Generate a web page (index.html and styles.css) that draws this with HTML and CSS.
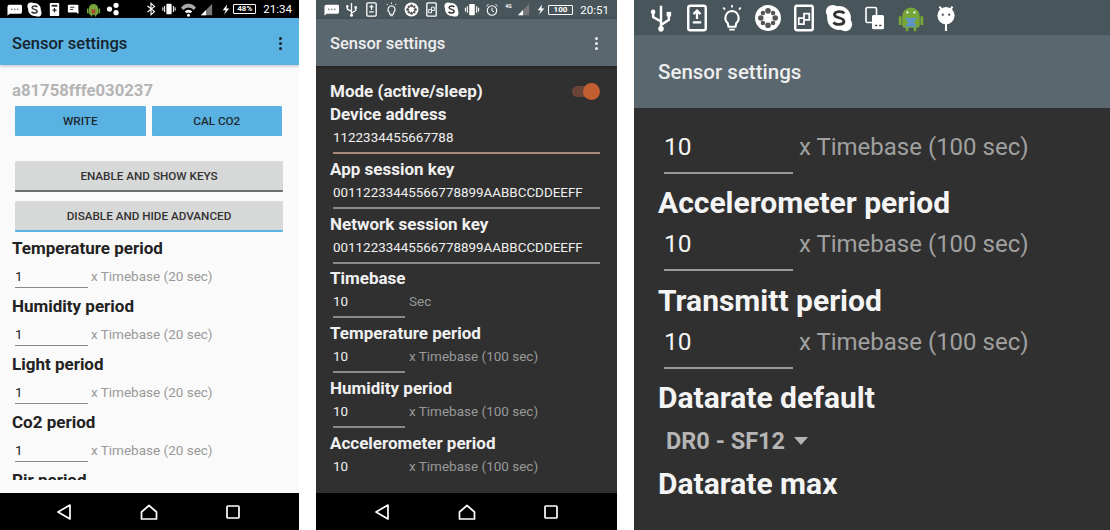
FILE: index.html

```html
<!DOCTYPE html>
<html lang="en">
<head>
    <meta charset="UTF-8">
    <title>Sensor settings</title>
    <link rel="stylesheet" href="styles.css">
</head>
<body>
    <svg class="defs" width="0" height="0">
        <defs>
            <g id="back"><path d="M14 1 L2 8 L14 15 Z" fill="none" stroke="#fff" stroke-width="1.7" stroke-linejoin="round"/></g>
            <g id="home"><path d="M1.5 8 L9 1.5 L16.5 8 V15 H1.5 Z" fill="none" stroke="#fff" stroke-width="1.7" stroke-linejoin="round"/></g>
            <g id="recent"><rect x="1" y="1" width="12" height="12" rx="1" fill="none" stroke="#fff" stroke-width="1.7"/></g>
            <g id="skype">
                <circle cx="8" cy="8" r="6.8" fill="#fff"/>
                <circle cx="4.4" cy="4.4" r="3.9" fill="#fff"/>
                <circle cx="11.6" cy="11.6" r="3.9" fill="#fff"/>
                <path d="M11 5.4 C10 3.9 5.6 3.9 5.4 6 C5.3 8.4 10.9 7.3 10.8 10 C10.6 12.2 6 12.1 4.9 10.4" fill="none" stroke="#333" stroke-width="1.6"/>
            </g>
            <g id="usb"><path d="M8 1 V15 M8 10 L3.5 7.5 V5 M8 12 L12.5 9 V6" fill="none" stroke="#fff" stroke-width="1.4"/><circle cx="3.5" cy="4.5" r="1.3" fill="#fff"/><rect x="11.2" y="4.5" width="2.6" height="2.6" fill="#fff"/><circle cx="8" cy="14.2" r="1.6" fill="#fff"/></g>
            <g id="phone-up"><rect x="3" y="1" width="10" height="14" rx="1.2" fill="none" stroke="#fff" stroke-width="1.4"/><path d="M8 3.8 V8.5 M6 5.8 L8 3.8 L10 5.8 M5.6 10.5 H10.4" fill="none" stroke="#fff" stroke-width="1.3"/></g>
            <g id="bulb"><path d="M8 4 A4 4 0 0 1 10.4 11 L10 13 H6 L5.6 11 A4 4 0 0 1 8 4 Z" fill="none" stroke="#fff" stroke-width="1.2"/><path d="M6.4 14.6 H9.6 M8 .5 V2 M3 2 L4 3.2 M13 2 L12 3.2" fill="none" stroke="#fff" stroke-width="1"/></g>
            <g id="reel"><circle cx="8" cy="8" r="7.4" fill="#fff"/><circle cx="8" cy="3.9" r="1.6" fill="#555"/><circle cx="8" cy="12.1" r="1.6" fill="#555"/><circle cx="3.9" cy="8" r="1.6" fill="#555"/><circle cx="12.1" cy="8" r="1.6" fill="#555"/><circle cx="5.1" cy="5.1" r="1.3" fill="#555"/><circle cx="10.9" cy="5.1" r="1.3" fill="#555"/><circle cx="5.1" cy="10.9" r="1.3" fill="#555"/><circle cx="10.9" cy="10.9" r="1.3" fill="#555"/></g>
            <g id="phone-copy"><rect x="3" y="1" width="10" height="14" rx="1" fill="none" stroke="#fff" stroke-width="1.4"/><path d="M8 5.5 H11 V9 H8 Z M5 8 H8 V11.5 H5 Z" fill="none" stroke="#fff" stroke-width="1"/></g>
            <g id="vibrate"><rect x="5" y="2" width="6" height="12" rx="1" fill="#fff"/><path d="M3 4.5 V11.5 M13 4.5 V11.5 M1 6 V10 M15 6 V10" stroke="#fff" stroke-width="1.2" fill="none"/></g>
            <g id="alarm"><circle cx="8" cy="8.6" r="5.4" fill="none" stroke="#fff" stroke-width="1.2"/><path d="M8 5.5 V9 L10.4 10 M1.6 3.6 L4 1.6 M14.4 3.6 L12 1.6" fill="none" stroke="#fff" stroke-width="1.1"/></g>
            <g id="chat"><path d="M2.5 3 H14.5 Q16 3 16 4.5 V11 Q16 12.5 14.5 12.5 H3 L0.5 14.5 V5 Q0.5 3 2.5 3 Z" fill="#fff"/><circle cx="5" cy="7.8" r="1" fill="#888"/><circle cx="8.2" cy="7.8" r="1" fill="#888"/><circle cx="11.4" cy="7.8" r="1" fill="#888"/></g>
            <g id="phone-sq"><rect x="3" y="1" width="10" height="14" rx="1" fill="#fff"/><rect x="5" y="3" width="6" height="2" fill="#222"/><path d="M8 6.5 V11 M5.8 8.7 H10.2" stroke="#222" stroke-width="1.3"/></g>
            <g id="note"><rect x="1" y="3" width="12" height="9" rx="1" fill="#fff"/><path d="M3.5 6 H8.5 M3.5 8.5 H7" stroke="#333" stroke-width="1.1"/><path d="M9.5 10 L13 14 V10 Z" fill="#fff"/></g>
            <g id="droid"><path d="M3 7 A5 5 0 0 1 13 7 V12 Q13 13.5 11.5 13.5 H11 V15.5 H9.5 V13.5 H6.5 V15.5 H5 V13.5 H4.5 Q3 13.5 3 12 Z" fill="#76a63a"/><rect x="1" y="7" width="1.6" height="5" fill="#76a63a"/><rect x="13.4" y="7" width="1.6" height="5" fill="#76a63a"/></g>
            <g id="droid-red"><use href="#droid"/><path d="M6 8 L10 12 M10 8 L6 12" stroke="#b5352c" stroke-width="1.5"/></g>
            <g id="droid-blue"><use href="#droid"/><path d="M4.5 8 H11.5 L9.5 10.5 L11.5 13 H4.5 L6.5 10.5 Z" fill="#5d93c9"/><circle cx="6" cy="4.8" r=".6" fill="#fff"/><circle cx="10" cy="4.8" r=".6" fill="#fff"/></g>
            <g id="share"><circle cx="4" cy="8" r="3" fill="#fff"/><circle cx="11.5" cy="3.8" r="3" fill="#fff"/><circle cx="11.5" cy="12.2" r="3" fill="#fff"/></g>
            <g id="swap"><rect x="2" y="1" width="7" height="10" rx="1" fill="none" stroke="#fff" stroke-width="1.1"/><rect x="6" y="6" width="8" height="9.5" rx="1" fill="#fff"/><path d="M8 13 H9.5 M10.8 13 H12.3" stroke="#444" stroke-width=".9"/></g>
            <g id="lollipop"><circle cx="8" cy="6.5" r="5.3" fill="#fff"/><path d="M8 11 V16 M4 1 L5.5 3 M12 1 L10.5 3" stroke="#fff" stroke-width="1.3"/><circle cx="6" cy="6" r=".7" fill="#556"/><circle cx="10" cy="6" r=".7" fill="#556"/></g>
            <g id="bt"><path d="M3 4.5 L11 11 L7 14.5 V1.5 L11 5 L3 11.5" fill="none" stroke="#fff" stroke-width="1.3"/></g>
            <g id="wifi"><path d="M1 6 A10 10 0 0 1 17 6 L14.5 8.5 A7 7 0 0 0 3.5 8.5 Z" fill="#aaa"/><path d="M5 10 A5.5 5.5 0 0 1 13 10 L11 12 A3 3 0 0 0 7 12 Z" fill="#fff"/><circle cx="9" cy="14" r="1.6" fill="#fff"/></g>
            <g id="signal"><path d="M14 1 V14 H1 Z" fill="#777"/><path d="M7 8 V14 H1 Z" fill="#fff"/></g>
            <g id="bolt"><path d="M7 0 L1 8 H5 L3 14 L10 5.5 H6 Z" fill="#fff"/></g>
        </defs>
    </svg>

    <!-- light theme -->
    <div class="phone phone-light">
        <div class="status status-light">
            <div class="status-icons">
                <svg width="15" height="15" viewBox="0 0 16 16"><use href="#chat"/></svg>
                <svg width="15" height="15" viewBox="0 0 16 16"><use href="#skype"/></svg>
                <svg width="15" height="15" viewBox="0 0 16 16"><use href="#phone-sq"/></svg>
                <svg width="14" height="14" viewBox="0 0 16 16"><use href="#note"/></svg>
                <svg width="15" height="15" viewBox="0 0 16 16"><use href="#droid-red"/></svg>
                <svg width="14" height="14" viewBox="0 0 16 16"><use href="#share"/></svg>
            </div>
            <div class="status-right">
                <svg width="14" height="14" viewBox="0 0 14 16"><use href="#bt"/></svg>
                <svg width="16" height="14" viewBox="0 0 16 16"><use href="#vibrate"/></svg>
                <svg width="17" height="15" viewBox="0 0 18 16"><use href="#wifi"/></svg>
                <svg width="13" height="13" viewBox="0 0 15 15"><use href="#signal"/></svg>
                <svg class="gap-left" width="8" height="11" viewBox="0 0 11 14"><use href="#bolt"/></svg>
                <span class="battery">48%</span>
                <span class="clock">21:34</span>
            </div>
        </div>
        <div class="appbar appbar-light">
            <span class="appbar-title">Sensor settings</span>
            <span class="dots"><i></i><i></i><i></i></span>
        </div>
        <div class="content content-light">
            <div class="device-id">a81758fffe030237</div>
            <div class="btn-row">
                <div class="btn btn-blue">WRITE</div>
                <div class="btn btn-blue">CAL CO2</div>
            </div>
            <div class="btn btn-grey btn-keys">ENABLE AND SHOW KEYS</div>
            <div class="btn btn-grey btn-adv">DISABLE AND HIDE ADVANCED</div>
            <div class="label">Temperature period</div>
            <div class="field"><span class="field-input">1</span><span class="field-unit">x Timebase (20 sec)</span></div>
            <div class="label">Humidity period</div>
            <div class="field"><span class="field-input">1</span><span class="field-unit">x Timebase (20 sec)</span></div>
            <div class="label">Light period</div>
            <div class="field"><span class="field-input">1</span><span class="field-unit">x Timebase (20 sec)</span></div>
            <div class="label">Co2 period</div>
            <div class="field"><span class="field-input">1</span><span class="field-unit">x Timebase (20 sec)</span></div>
            <div class="label">Pir period</div>
        </div>
        <div class="nav nav-light">
            <svg width="16" height="16" viewBox="0 0 16 16"><use href="#back"/></svg>
            <svg width="18" height="16" viewBox="0 0 18 16"><use href="#home"/></svg>
            <svg width="14" height="14" viewBox="0 0 14 14"><use href="#recent"/></svg>
        </div>
    </div>

    <!-- dark theme -->
    <div class="phone phone-dark">
        <div class="status status-dark">
            <div class="status-icons">
                <svg width="15" height="15" viewBox="0 0 16 16"><use href="#chat"/></svg>
                <svg width="15" height="15" viewBox="0 0 16 16"><use href="#usb"/></svg>
                <svg width="15" height="15" viewBox="0 0 16 16"><use href="#phone-up"/></svg>
                <svg width="15" height="15" viewBox="0 0 16 16"><use href="#bulb"/></svg>
                <svg width="15" height="15" viewBox="0 0 16 16"><use href="#reel"/></svg>
                <svg width="15" height="15" viewBox="0 0 16 16"><use href="#phone-copy"/></svg>
                <svg width="15" height="15" viewBox="0 0 16 16"><use href="#skype"/></svg>
                <svg width="16" height="15" viewBox="0 0 16 16"><use href="#vibrate"/></svg>
                <svg width="14" height="14" viewBox="0 0 16 16"><use href="#alarm"/></svg>
            </div>
            <div class="status-right">
                <span class="net">4G</span>
                <svg width="13" height="13" viewBox="0 0 15 15"><use href="#signal"/></svg>
                <svg class="gap-small" width="8" height="11" viewBox="0 0 11 14"><use href="#bolt"/></svg>
                <span class="battery battery-wide">100</span>
                <span class="clock">20:51</span>
            </div>
        </div>
        <div class="appbar appbar-dark">
            <span class="appbar-title">Sensor settings</span>
            <span class="dots dots-white"><i></i><i></i><i></i></span>
        </div>
        <div class="content content-dark">
            <div class="mode-row">
                <div class="label">Mode (active/sleep)</div>
                <div class="toggle"><span class="toggle-thumb"></span></div>
            </div>
            <div class="label">Device address</div>
            <div class="key-input key-active">1122334455667788</div>
            <div class="label">App session key</div>
            <div class="key-input">00112233445566778899AABBCCDDEEFF</div>
            <div class="label">Network session key</div>
            <div class="key-input">00112233445566778899AABBCCDDEEFF</div>
            <div class="label">Timebase</div>
            <div class="field"><span class="field-input">10</span><span class="field-unit">Sec</span></div>
            <div class="label">Temperature period</div>
            <div class="field"><span class="field-input">10</span><span class="field-unit">x Timebase (100 sec)</span></div>
            <div class="label">Humidity period</div>
            <div class="field"><span class="field-input">10</span><span class="field-unit">x Timebase (100 sec)</span></div>
            <div class="label">Accelerometer period</div>
            <div class="field"><span class="field-input field-last">10</span><span class="field-unit">x Timebase (100 sec)</span></div>
        </div>
        <div class="nav nav-dark">
            <svg width="16" height="16" viewBox="0 0 16 16"><use href="#back"/></svg>
            <svg width="18" height="16" viewBox="0 0 18 16"><use href="#home"/></svg>
            <svg width="14" height="14" viewBox="0 0 14 14"><use href="#recent"/></svg>
        </div>
    </div>

    <!-- zoomed dark theme -->
    <div class="phone phone-zoom">
        <div class="status status-zoom">
            <svg width="28" height="28" viewBox="0 0 16 16"><use href="#usb"/></svg>
            <svg width="28" height="28" viewBox="0 0 16 16"><use href="#phone-up"/></svg>
            <svg width="28" height="28" viewBox="0 0 16 16"><use href="#bulb"/></svg>
            <svg width="28" height="28" viewBox="0 0 16 16"><use href="#reel"/></svg>
            <svg width="28" height="28" viewBox="0 0 16 16"><use href="#phone-copy"/></svg>
            <svg width="28" height="28" viewBox="0 0 16 16"><use href="#skype"/></svg>
            <svg width="24" height="24" viewBox="0 0 16 16"><use href="#swap"/></svg>
            <svg width="28" height="28" viewBox="0 0 16 16"><use href="#droid-blue"/></svg>
            <svg width="26" height="26" viewBox="0 0 16 16"><use href="#lollipop"/></svg>
        </div>
        <div class="appbar appbar-zoom">
            <span class="appbar-title">Sensor settings</span>
        </div>
        <div class="content content-zoom">
            <div class="field"><span class="field-input">10</span><span class="field-unit">x Timebase (100 sec)</span></div>
            <div class="label">Accelerometer period</div>
            <div class="field"><span class="field-input">10</span><span class="field-unit">x Timebase (100 sec)</span></div>
            <div class="label">Transmitt period</div>
            <div class="field"><span class="field-input">10</span><span class="field-unit">x Timebase (100 sec)</span></div>
            <div class="label">Datarate default</div>
            <div class="spinner">DR0 - SF12<span class="spinner-arrow"></span></div>
            <div class="label">Datarate max</div>
        </div>
    </div>
</body>
</html>
```

FILE: styles.css

```css
* {
    box-sizing: border-box;
}
body {
    margin: 0;
    width: 1110px;
    height: 530px;
    overflow: hidden;
    background: #fff;
    font-family: Roboto, "Liberation Sans", sans-serif;
    display: flex;
}
.defs {
    position: absolute;
}
.phone {
    height: 530px;
    display: flex;
    flex-direction: column;
    overflow: hidden;
}
.phone-light {
    width: 299px;
    margin-right: 17px;
}
.phone-dark {
    width: 301px;
    margin-right: 17px;
}
.phone-zoom {
    width: 476px;
}

/* status bars */
.status {
    display: flex;
    align-items: center;
    justify-content: space-between;
    flex: none;
    color: #fff;
}
.status-light {
    height: 18px;
    background: #000;
    padding: 0 7px;
}
.status-dark {
    height: 19px;
    background: #48555b;
    padding: 0 8px;
}
.status-zoom {
    height: 35px;
    background: #48555b;
    display: grid;
    grid-template-columns: repeat(9, 35.7px);
    justify-content: start;
    justify-items: center;
    padding-left: 9px;
}
.status-icons, .status-right {
    display: flex;
    align-items: center;
    gap: 5px;
}
.status-right {
    gap: 3px;
}
.gap-left {
    margin-left: 6px;
}
.gap-small {
    margin-left: 4px;
}
.clock {
    font-size: 11.5px;
    margin-left: 4px;
}
.battery {
    font-size: 8px;
    font-weight: 700;
    border: 1px solid #fff;
    border-radius: 1px;
    height: 10px;
    line-height: 8px;
    padding: 0 3px;
}
.battery-wide {
    padding: 0 5px;
}
.net {
    font-size: 5px;
    font-weight: 700;
    align-self: flex-start;
    margin-right: 2px;
}

/* app bars */
.appbar {
    display: flex;
    align-items: center;
    justify-content: space-between;
    flex: none;
}
.appbar-title {
    font-weight: 500;
}
.appbar-light {
    height: 47px;
    background: #5ab2e2;
    color: #17242c;
    padding: 3px 17px 0 12px;
    box-shadow: 0 1px 3px rgba(0,0,0,0.25);
    position: relative;
}
.appbar-light .appbar-title, .appbar-dark .appbar-title {
    font-size: 16.5px;
}
.appbar-dark {
    height: 47px;
    background: #5a676f;
    color: #eee;
    padding: 2px 19px 0 14px;
    box-shadow: 0 1px 3px rgba(0,0,0,0.4);
    position: relative;
}
.appbar-zoom {
    height: 73px;
    background: #5a676f;
    color: #eee;
    padding: 0 24px;
}
.appbar-zoom .appbar-title {
    font-size: 20.5px;
}
.dots {
    display: flex;
    flex-direction: column;
    gap: 2px;
}
.dots i {
    width: 3px;
    height: 3px;
    border-radius: 50%;
    background: #17242c;
}
.dots-white i {
    background: #eee;
}

/* content */
.content {
    flex: 1;
    overflow: hidden;
}
.content-light {
    background: #fafafa;
    color: #222;
    padding: 16px 12px 0;
    border-bottom: 13px solid #fafafa; /* list stops short of the nav bar */
}
.content-dark {
    background: #303030;
    color: #f0f0f0;
    padding: 15px 17px 0 14px;
}
.content-zoom {
    background: #303030;
    color: #f4f4f4;
    padding: 15.5px 24px 0;
}
.label {
    font-size: 17px;
    font-weight: 700;
    line-height: 20px;
}
.device-id {
    font-size: 16.7px;
    font-weight: 700;
    color: #b4b4b4;
    line-height: 20px;
}
.btn {
    display: flex;
    align-items: center;
    justify-content: center;
    font-size: 11.7px;
    font-weight: 500;
    border-radius: 1px;
}
.btn-row {
    display: flex;
    gap: 6px;
    margin: 5px 5px 0 3px;
}
.btn-blue {
    flex: 1;
    height: 30px;
    background: #5ab2e2;
    color: #1d2a30;
}
.btn-grey {
    margin: 0 4px 0 3px;
    background: #d7d8d8;
    color: #333;
}
.btn-keys {
    height: 31px;
    margin-top: 25px;
    border-bottom: 2px solid #6f7070;
}
.btn-adv {
    height: 31px;
    margin-top: 9px;
    margin-bottom: 6px;
    border-bottom: 2px solid #5ab2e2;
}

/* inputs */
.field {
    display: flex;
    align-items: flex-start;
}
.field-input {
    font-size: 13.4px;
    line-height: 22px;
    height: 22px;
    border-bottom: 1px solid #888;
    width: 73px;
    margin-left: 3px;
}
.field-unit {
    font-size: 13.5px;
    line-height: 21px;
    color: #999;
    margin-left: 3px;
}
.content-light .field {
    margin-top: 8px;
    margin-bottom: 8px;
}
.content-dark .field {
    margin-bottom: 4.8px;
}
.content-dark .field-input {
    height: 30px;
    line-height: 27px;
    width: 72px;
    border-bottom: 2px solid #8a8a8a;
}
.content-dark .field-input.field-last {
    border-bottom-color: transparent;
}
.content-dark .field-unit {
    line-height: 26px;
    margin-left: 4px;
}
.mode-row {
    display: flex;
    justify-content: space-between;
    align-items: center;
    height: 23px;
    padding-bottom: 3px;
}
.toggle {
    width: 26px;
    height: 11px;
    border-radius: 6px;
    background: #6a4536;
    position: relative;
    margin-right: 2px;
}
.toggle-thumb {
    position: absolute;
    right: -2px;
    top: -3px;
    width: 17px;
    height: 17px;
    border-radius: 50%;
    background: #c15f31;
}
.key-input {
    font-size: 13.4px;
    line-height: 27px;
    height: 30px;
    margin: 0 0 4.8px 3px;
    border-bottom: 2px solid #8a8a8a;
}
.key-active {
    border-bottom-color: #a98a78;
}

/* zoom column */
.content-zoom .label {
    font-size: 30px;
    line-height: 36px;
}
.content-zoom .field {
    margin-bottom: 11.5px;
}
.content-zoom .field-input {
    font-size: 24.5px;
    width: 129px;
    height: 50px;
    line-height: 46px;
    margin-left: 6px;
    border-bottom: 2px solid #999;
}
.content-zoom .field-unit {
    font-size: 24px;
    line-height: 46px;
    margin-left: 6px;
    color: #a0a0a0;
}
.spinner {
    display: flex;
    align-items: center;
    gap: 9px;
    font-size: 23.5px;
    font-weight: 700;
    color: #b5b5b5;
    padding-left: 8px;
    height: 50px;
}
.spinner-arrow {
    width: 0;
    height: 0;
    border-left: 7px solid transparent;
    border-right: 7px solid transparent;
    border-top: 8px solid #b5b5b5;
}

/* nav bar */
.nav {
    height: 37px;
    flex: none;
    background: #000;
    display: flex;
    align-items: center;
    justify-content: space-between;
}
.nav-light {
    padding: 0 59px 0 56px;
}
.nav-dark {
    padding: 0 59px 0 58px;
}
```
